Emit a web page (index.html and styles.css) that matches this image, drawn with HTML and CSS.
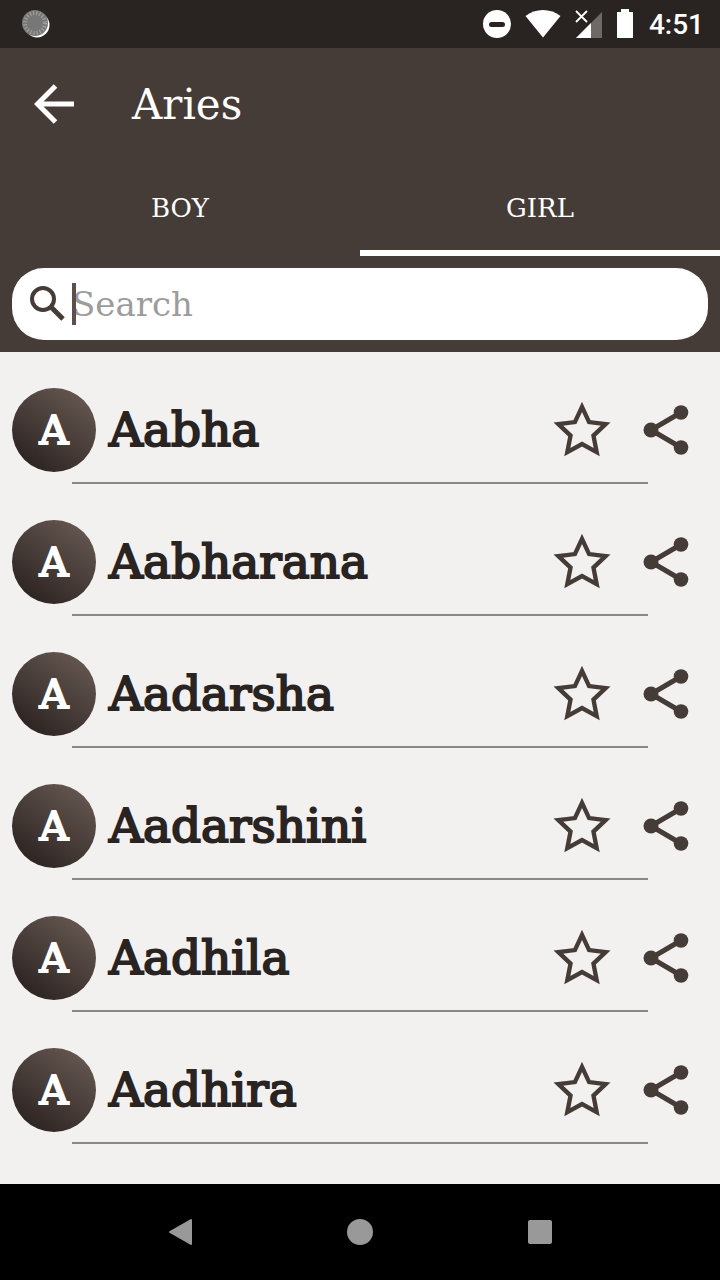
FILE: index.html
```html
<!DOCTYPE html>
<html lang="en">

<head>
    <meta charset="UTF-8">
    <meta name="viewport" content="width=device-width, initial-scale=1.0">
    <title>Aries</title>
    <link rel="stylesheet" href="styles.css">
</head>

<body>
    <!-- shared icons -->
    <svg class="sprite" aria-hidden="true">
        <symbol id="star" viewBox="0 0 172 165">
            <path d="M86 17 107 62 156 68 120 102 129.500 151 86 127 42.500 151 52 102 16 68 65 62Z" fill="none" stroke="currentColor" stroke-width="13" stroke-miterlimit="10"/>
        </symbol>
        <symbol id="share" viewBox="0 0 46 50">
            <path d="M38 7.500 8 25 38 42.500" fill="none" stroke="currentColor" stroke-width="5"/>
            <circle cx="38" cy="7.500" r="7.300"/>
            <circle cx="8" cy="25" r="7.500"/>
            <circle cx="38" cy="42.500" r="7.300"/>
        </symbol>
    </svg>

    <div class="status-bar">
        <svg class="sync" width="28" height="28" viewBox="0 0 28 28">
            <circle cx="15" cy="15" r="12.500" fill="#fff"/>
            <circle cx="13" cy="13" r="13" fill="#777"/>
            <circle cx="13" cy="13" r="10" fill="none" stroke="#a0a0a0" stroke-width="4" stroke-dasharray="1.200 2"/>
        </svg>
        <div class="status-icons">
            <svg width="28" height="28" viewBox="0 0 28 28">
                <circle cx="14" cy="14" r="14" fill="#fff"/>
                <rect x="6" y="12" width="16" height="5" rx="2.500" fill="#292422"/>
            </svg>
            <svg width="36" height="28" viewBox="0 0 36 28">
                <path d="M.5 6C10-2 26-2 35.500 6L18 27.500Z" fill="#fff"/>
            </svg>
            <svg width="28" height="30" viewBox="0 0 28 30">
                <path d="M27 3V29H1Z" fill="#6d6967"/>
                <path d="M16 14V29H1Z" fill="#fff"/>
                <path d="M1 2 12 13M12 2 1 13" stroke="#fff" stroke-width="1.800"/>
            </svg>
            <svg width="16" height="30" viewBox="0 0 16 30">
                <path d="M4 0H12V3H16V29H0V3H4Z" fill="#fff"/>
            </svg>
        </div>
        <span class="clock">4:51</span>
    </div>

    <header class="header">
        <div class="toolbar">
            <button class="back" aria-label="Back">
                <svg width="40" height="40" viewBox="0 0 40 40">
                    <path d="M21.500 2 3.500 20 21.500 38M3.500 20H40" fill="none" stroke="#fff" stroke-width="5"/>
                </svg>
            </button>
            <h1 class="title">Aries</h1>
        </div>
        <nav class="tabs">
            <a class="tab" href="#boy">BOY</a>
            <a class="tab active" href="#girl">GIRL</a>
        </nav>
        <div class="search">
            <label for="search" aria-label="Search">
                <svg width="36" height="36" viewBox="0 0 36 36">
                    <circle cx="13" cy="13" r="11" fill="none" stroke="#463c37" stroke-width="4"/>
                    <path d="M21 21 33 33" stroke="#463c37" stroke-width="5"/>
                </svg>
            </label>
            <div class="search-field">
                <input id="search" type="text" placeholder="Search">
                <span class="caret"></span>
            </div>
        </div>
    </header>

    <main>
        <ul class="names">
            <li class="name-item">
                <div class="name-row">
                    <span class="avatar">A</span>
                    <span class="name">Aabha</span>
                    <button class="star" aria-label="Favourite Aabha"><svg><use href="#star"/></svg></button>
                    <button class="share" aria-label="Share Aabha"><svg><use href="#share"/></svg></button>
                </div>
            </li>
            <li class="name-item">
                <div class="name-row">
                    <span class="avatar">A</span>
                    <span class="name">Aabharana</span>
                    <button class="star" aria-label="Favourite Aabharana"><svg><use href="#star"/></svg></button>
                    <button class="share" aria-label="Share Aabharana"><svg><use href="#share"/></svg></button>
                </div>
            </li>
            <li class="name-item">
                <div class="name-row">
                    <span class="avatar">A</span>
                    <span class="name">Aadarsha</span>
                    <button class="star" aria-label="Favourite Aadarsha"><svg><use href="#star"/></svg></button>
                    <button class="share" aria-label="Share Aadarsha"><svg><use href="#share"/></svg></button>
                </div>
            </li>
            <li class="name-item">
                <div class="name-row">
                    <span class="avatar">A</span>
                    <span class="name">Aadarshini</span>
                    <button class="star" aria-label="Favourite Aadarshini"><svg><use href="#star"/></svg></button>
                    <button class="share" aria-label="Share Aadarshini"><svg><use href="#share"/></svg></button>
                </div>
            </li>
            <li class="name-item">
                <div class="name-row">
                    <span class="avatar">A</span>
                    <span class="name">Aadhila</span>
                    <button class="star" aria-label="Favourite Aadhila"><svg><use href="#star"/></svg></button>
                    <button class="share" aria-label="Share Aadhila"><svg><use href="#share"/></svg></button>
                </div>
            </li>
            <li class="name-item">
                <div class="name-row">
                    <span class="avatar">A</span>
                    <span class="name">Aadhira</span>
                    <button class="star" aria-label="Favourite Aadhira"><svg><use href="#star"/></svg></button>
                    <button class="share" aria-label="Share Aadhira"><svg><use href="#share"/></svg></button>
                </div>
            </li>
        </ul>
    </main>

    <div class="nav-bar">
        <button aria-label="Back">
            <svg width="26" height="28" viewBox="0 0 26 28">
                <path d="M3 14 24 2V26Z" fill="#999" stroke="#999" stroke-width="2" stroke-linejoin="round"/>
            </svg>
        </button>
        <button aria-label="Home">
            <svg width="26" height="26" viewBox="0 0 26 26">
                <circle cx="13" cy="13" r="13" fill="#999"/>
            </svg>
        </button>
        <button aria-label="Recent apps">
            <svg width="24" height="24" viewBox="0 0 24 24">
                <rect width="24" height="24" rx="2" fill="#999"/>
            </svg>
        </button>
    </div>
</body>

</html>
```
FILE: styles.css
```css
* {
    box-sizing: border-box;
}

body {
    margin: 0;
    min-height: 100vh;
    display: flex;
    flex-direction: column;
    background-color: #f3f1f0;
    font-family: "DejaVu Serif", serif;
}

button {
    display: flex;
    align-items: center;
    justify-content: center;
    padding: 0;
    border: none;
    background: none;
    color: #463c37;
    cursor: pointer;
}

svg {
    display: block;
}

.sprite {
    position: absolute;
    width: 0;
    height: 0;
}

/* status bar */
.status-bar {
    display: flex;
    align-items: center;
    height: 48px;
    padding: 0 16px 0 22px;
    background-color: #292422;
}

.status-icons {
    display: flex;
    align-items: center;
    gap: 14px;
    margin-left: auto;
    margin-right: 16px;
}

.clock {
    color: #fff;
    font-family: Roboto, sans-serif;
    font-size: 28px;
    font-weight: 500;
}

/* header */
.header {
    display: flow-root;
    background-color: #463c37;
    color: #fff;
}

.toolbar {
    display: flex;
    align-items: center;
    height: 112px;
    padding: 0 34px;
    gap: 58px;
}

.title {
    margin: 0;
    font-size: 42px;
    font-weight: normal;
}

.tabs {
    display: flex;
    height: 96px;
}

.tab {
    flex: 1;
    display: flex;
    align-items: center;
    justify-content: center;
    border-top: 6px solid transparent;
    border-bottom: 6px solid transparent;
    color: #fff;
    font-size: 26px;
    text-decoration: none;
}

.tab.active {
    border-bottom-color: #fff;
}

.search {
    display: flex;
    align-items: center;
    gap: 6px;
    height: 72px;
    margin: 12px;
    padding: 0 18px;
    border-radius: 32px;
    background-color: #fff;
}

.search-field {
    position: relative;
    flex: 1;
}

.search input {
    display: block;
    width: 100%;
    height: 42px;
    padding: 0;
    border: none;
    outline: none;
    background: none;
    color: #292422;
    font-family: inherit;
    font-size: 34px;
}

.search input::placeholder {
    color: #9c9c9c;
}

.caret {
    position: absolute;
    top: 0;
    left: 0;
    width: 4px;
    height: 42px;
    background-color: #5e4e4c;
}

/* list of names */
main {
    flex: 1;
}

.names {
    margin: 0;
    padding: 0;
    list-style: none;
}

.name-item {
    padding-top: 36px;
}

.name-item::after {
    content: "";
    display: block;
    height: 2px;
    margin: 10px 72px 0;
    background-color: #8c8886;
}

.name-row {
    display: flex;
    align-items: center;
    height: 84px;
    padding: 0 31px 0 12px;
}

.avatar {
    width: 84px;
    height: 84px;
    margin-right: 13px;
    border-radius: 50%;
    background: linear-gradient(35deg, #2b2321 10%, #655751 90%);
    color: #fff;
    font-size: 40px;
    line-height: 84px;
    text-align: center;
    -webkit-text-stroke: 2px #fff;
}

.name {
    flex: 1;
    color: #292422;
    font-size: 47px;
    line-height: 84px;
    -webkit-text-stroke: 2px #292422;
}

.star {
    padding-bottom: 2px;
}

.star svg {
    width: 58px;
    height: 56px;
}

.share {
    margin-left: 32px;
}

.share svg {
    width: 46px;
    height: 50px;
    fill: currentColor;
}

/* navigation bar */
.nav-bar {
    display: flex;
    height: 96px;
    padding: 0 12.5%;
    background-color: #000;
}

.nav-bar button {
    flex: 1;
}
```
